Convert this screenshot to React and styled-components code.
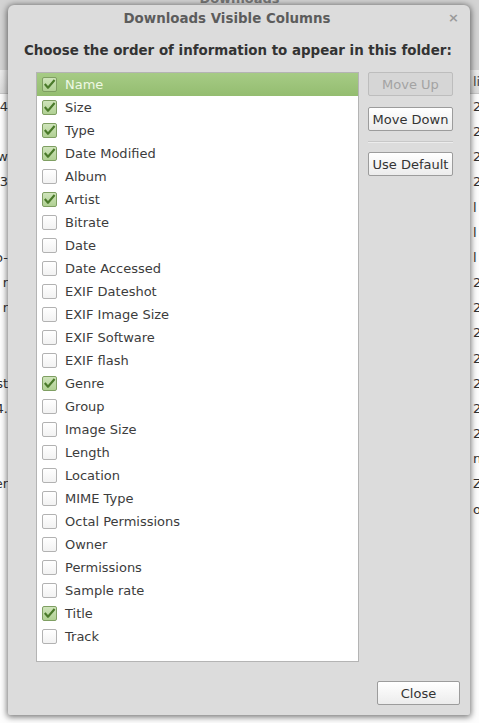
import React from 'react';
import styled, { createGlobalStyle } from 'styled-components';

const GlobalStyle = createGlobalStyle`
  html, body {
    margin: 0;
    padding: 0;
    background: #d2d2d2;
    overflow: hidden;
  }
`;

const Screen = styled.div`
  position: relative;
  width: 479px;
  height: 723px;
  overflow: hidden;
  font-family: 'DejaVu Sans', 'Liberation Sans', sans-serif;
`;

/* window behind the dialog */
const BackWindow = styled.div`
  display: flex;
  flex-direction: column;
  width: 100%;
  height: 100%;
  background: #f4f4f4;
`;

const BackTop = styled.div`
  height: 72px;
  background: #d3d3d3;
  display: flex;
  justify-content: center;
`;

const BackTitle = styled.div`
  margin-top: -9px;
  font-weight: bold;
  font-size: 13px;
  color: #777;
`;

const BackHeader = styled.div`
  height: 24px;
  display: flex;
  justify-content: space-between;
  align-items: center;
  background: linear-gradient(#ececec, #dadada);
  border-bottom: 1px solid #c6c6c6;
  font-size: 13px;
  color: #444;
`;

const BackRow = styled.div`
  height: 26px;
  display: flex;
  justify-content: space-between;
  align-items: center;
  font-size: 13px;
  color: #333;
  background: #fdfdfd;
`;

const BackCell = styled.span`
  width: ${(p) => (p.right ? '6px' : '8px')};
  overflow: hidden;
  white-space: nowrap;
  display: flex;
  justify-content: ${(p) => (p.right ? 'flex-start' : 'flex-end')};
`;

const Dialog = styled.div`
  position: absolute;
  left: 8px;
  top: 5px;
  width: 462px;
  height: 710px;
  background: #dcdcdc;
  border-radius: 6px 6px 2px 2px;
  box-shadow: 0 1px 6px 1px rgba(0, 0, 0, 0.55);
  display: flex;
  flex-direction: column;
  box-sizing: border-box;
`;

const TitleBar = styled.div`
  height: 26px;
  display: flex;
  align-items: center;
  justify-content: center;
  position: relative;
  padding-right: 24px;
  font-size: 13.4px;
  font-weight: bold;
  color: #5c5c5c;
`;

const CloseX = styled.span`
  position: absolute;
  right: 11px;
  top: 5px;
  font-size: 13px;
  color: #9a9a9a;
  font-weight: bold;
`;

const Heading = styled.div`
  padding: 12px 0 0 16px;
  height: 28px;
  font-size: 13.4px;
  font-weight: bold;
  color: #333;
  box-sizing: border-box;
  white-space: nowrap;
`;

const Body = styled.div`
  display: flex;
  gap: 9px;
  padding: 13px 0 0 28px;
`;

const List = styled.div`
  width: 323px;
  height: 590px;
  background: #fff;
  border: 1px solid #b4b4b4;
  box-sizing: border-box;
  display: flex;
  flex-direction: column;
`;

const Row = styled.div`
  height: 23px;
  flex-shrink: 0;
  display: flex;
  align-items: center;
  gap: 8px;
  padding-left: 5px;
  font-size: 13px;
  color: ${(p) => (p.selected ? '#eef8e4' : '#3c3c3c')};
  background: ${(p) => (p.selected ? 'linear-gradient(#a6cb85, #94bd70)' : 'transparent')};
`;

const Box = styled.span`
  width: 15px;
  height: 15px;
  box-sizing: border-box;
  border-radius: 2px;
  border: 1px solid ${(p) => (p.checked ? '#7f9f62' : '#b2b2b2')};
  background: ${(p) => (p.checked ? 'linear-gradient(#cfe4bb, #b0d093)' : 'linear-gradient(#ffffff, #f2f2f2)')};
  display: flex;
  align-items: center;
  justify-content: center;
`;

const Side = styled.div`
  width: 85px;
  display: flex;
  flex-direction: column;
`;

const Button = styled.div`
  height: 24px;
  box-sizing: border-box;
  border: 1px solid ${(p) => (p.disabled ? '#bdbdbd' : '#9c9c9c')};
  border-radius: 2px;
  background: ${(p) => (p.disabled ? '#d6d6d6' : 'linear-gradient(#ffffff, #ececec)')};
  color: ${(p) => (p.disabled ? '#a3a3a3' : '#333')};
  font-size: 13px;
  white-space: nowrap;
  display: flex;
  align-items: center;
  justify-content: center;
  margin-bottom: ${(p) => p.gap || 0}px;
`;

const Separator = styled.div`
  height: 1px;
  background: #c8c8c8;
  border-bottom: 1px solid #ececec;
  margin-bottom: 9px;
`;

const Footer = styled.div`
  flex: 1;
  display: flex;
  justify-content: flex-end;
  align-items: flex-end;
  padding: 0 10px 10px 0;
`;

const CloseButton = styled(Button)`
  width: 83px;
`;

const items = [
  ['Name', true],
  ['Size', true],
  ['Type', true],
  ['Date Modified', true],
  ['Album', false],
  ['Artist', true],
  ['Bitrate', false],
  ['Date', false],
  ['Date Accessed', false],
  ['EXIF Dateshot', false],
  ['EXIF Image Size', false],
  ['EXIF Software', false],
  ['EXIF flash', false],
  ['Genre', true],
  ['Group', false],
  ['Image Size', false],
  ['Length', false],
  ['Location', false],
  ['MIME Type', false],
  ['Octal Permissions', false],
  ['Owner', false],
  ['Permissions', false],
  ['Sample rate', false],
  ['Title', true],
  ['Track', false],
];

const backRows = [
  ['4', '2'], ['', '2'], ['w', '2'], ['3', '2'], ['', 'l'], ['', 'l'], ['o-', 'l'],
  ['r', '2'], ['r', '2'], ['', '2'], ['', '2'], ['st', '2'], ['4.', '2'], ['', '2'],
  ['', 'n'], ['er', 'Z'], ['', 'ow'], ['', ''], ['', ''], ['', ''], ['', ''], ['', ''],
  ['', ''], ['', ''], ['', ''],
];

function Check() {
  return (
    <svg width="13" height="13" viewBox="0 0 13 13">
      <path d="M1.8 6 L5 9.8 L11.6 2" fill="none" stroke="#4a7a2a" strokeWidth="2.1" strokeLinejoin="round" />
    </svg>
  );
}

export default function App() {
  return (
    <Screen>
      <GlobalStyle />
      <BackWindow>
        <BackTop>
          <BackTitle>Downloads</BackTitle>
        </BackTop>
        <BackHeader>
          <BackCell></BackCell>
          <BackCell right>lif</BackCell>
        </BackHeader>
        {backRows.map(([l, r], i) => (
          <BackRow key={i}>
            <BackCell>{l}</BackCell>
            <BackCell right>{r}</BackCell>
          </BackRow>
        ))}
      </BackWindow>

      <Dialog>
        <TitleBar>
          Downloads Visible Columns
          <CloseX>×</CloseX>
        </TitleBar>
        <Heading>Choose the order of information to appear in this folder:</Heading>
        <Body>
          <List>
            {items.map(([name, checked], i) => (
              <Row key={name} selected={i === 0}>
                <Box checked={checked}>{checked && <Check />}</Box>
                {name}
              </Row>
            ))}
          </List>
          <Side>
            <Button disabled gap={11}>Move Up</Button>
            <Button gap={10}>Move Down</Button>
            <Separator />
            <Button>Use Default</Button>
          </Side>
        </Body>
        <Footer>
          <CloseButton>Close</CloseButton>
        </Footer>
      </Dialog>
    </Screen>
  );
}
